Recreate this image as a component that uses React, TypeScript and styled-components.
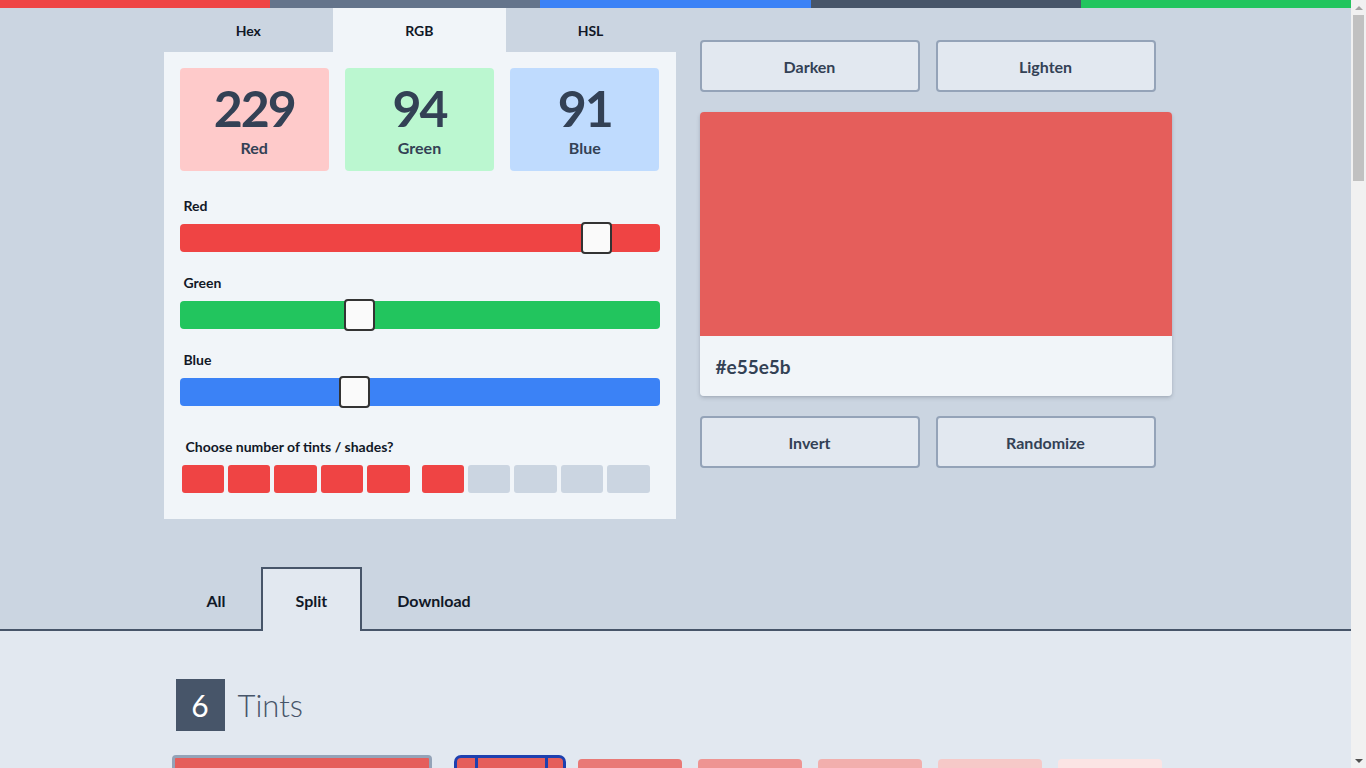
import React from "react";
import styled, { createGlobalStyle } from "styled-components";

const GlobalStyle = createGlobalStyle`
  html, body { margin: 0; padding: 0; }
  body {
    background: #cbd5e1;
    font-family: Lato, "Noto Sans", sans-serif;
    color: #111827;
    padding-right: 15px;
  }
  * { box-sizing: border-box; }
`;

const FakeScrollbar = styled.div`
  position: fixed;
  top: 0;
  right: 0;
  width: 15px;
  height: 100vh;
  background: #f1f1f1;
  display: flex;
  flex-direction: column;
  align-items: center;
  z-index: 10;
`;
const ScrollArrow = styled.div<{ $down?: boolean }>`
  height: 15px;
  width: 15px;
  display: flex;
  align-items: center;
  justify-content: center;
  &::after {
    content: "";
    border-left: 4px solid transparent;
    border-right: 4px solid transparent;
    ${(p) =>
      p.$down
        ? "border-top: 4px solid #505050;"
        : "border-bottom: 4px solid #a3a3a3;"}
  }
`;
const ScrollTrackArea = styled.div`
  flex: 1;
  width: 11px;
`;
const ScrollThumb = styled.div`
  width: 11px;
  height: 166px;
  background: #c1c1c1;
`;

const TopBar = styled.div`
  display: flex;
  height: 8px;
`;
const TopSeg = styled.div<{ $c: string }>`
  flex: 1;
  background: ${(p) => p.$c};
`;

const Main = styled.div`
  width: 1024px;
  margin: 0 auto;
  display: grid;
  grid-template-columns: 512px 472px;
  column-gap: 24px;
`;

const LeftCol = styled.div`
  display: flex;
  flex-direction: column;
`;

const ModeTabs = styled.div`
  display: flex;
  height: 44px;
`;
const ModeTab = styled.div<{ $active?: boolean }>`
  flex: 1 1 auto;
  display: flex;
  align-items: center;
  justify-content: center;
  font-size: 14px;
  font-weight: 700;
  color: #111827;
  background: ${(p) => (p.$active ? "#f1f5f9" : "transparent")};
`;

const Panel = styled.div`
  background: #f1f5f9;
  padding: 16px 16px 26px;
  display: flex;
  flex-direction: column;
`;

const Stats = styled.div`
  display: grid;
  grid-template-columns: repeat(3, 1fr);
  gap: 16px;
  margin-bottom: 4px;
`;
const StatBox = styled.div<{ $bg: string }>`
  height: 103px;
  border-radius: 4px;
  background: ${(p) => p.$bg};
  display: flex;
  flex-direction: column;
  align-items: center;
  color: #334155;
`;
const StatNum = styled.div`
  font-size: 50px;
  font-weight: 700;
  letter-spacing: -2px;
  line-height: 50px;
  margin-top: 15px;
`;
const StatLabel = styled.div`
  font-size: 16px;
  font-weight: 700;
  line-height: 20px;
  margin-top: 5px;
`;

const SliderGroup = styled.div`
  margin-top: 23px;
`;
const SliderLabel = styled.div`
  font-size: 14px;
  font-weight: 700;
  line-height: 16px;
  padding-left: 4px;
  margin-bottom: 10px;
`;
const Track = styled.div<{ $c: string }>`
  position: relative;
  height: 28px;
  border-radius: 4px;
  background: ${(p) => p.$c};
`;
const Thumb = styled.div`
  position: absolute;
  top: -2px;
  width: 31px;
  height: 32px;
  border: 2px solid #333;
  border-radius: 4px;
  background: #fafafa;
`;

const ChooseLabel = styled.div`
  margin-top: 33px;
  padding-left: 6px;
  font-size: 14px;
  font-weight: 700;
  line-height: 16px;
  margin-bottom: 10px;
`;
const Squares = styled.div`
  display: flex;
  gap: 12px;
  width: 470px;
  padding-left: 2px;
`;
const SquareGroup = styled.div`
  flex: 1;
  display: flex;
  gap: 4px;
`;
const Square = styled.div<{ $on: boolean }>`
  flex: 1;
  height: 28px;
  border-radius: 3px;
  background: ${(p) => (p.$on ? "#ef4444" : "#cbd5e1")};
`;

const RightCol = styled.div`
  padding-top: 32px;
  display: flex;
  flex-direction: column;
  gap: 20px;
`;
const ButtonRow = styled.div`
  display: flex;
  gap: 16px;
`;
const Button = styled.button`
  width: 220px;
  height: 52px;
  background: #e2e8f0;
  border: 2px solid #94a3b8;
  border-radius: 4px;
  font-family: inherit;
  font-size: 16px;
  font-weight: 700;
  color: #334155;
`;
const Card = styled.div`
  border-radius: 4px;
  overflow: hidden;
  box-shadow: 0 2px 4px rgba(15, 23, 42, 0.15), 0 1px 2px rgba(15, 23, 42, 0.08);
`;
const CardColor = styled.div<{ $c: string }>`
  height: 224px;
  background: ${(p) => p.$c};
`;
const CardFooter = styled.div`
  height: 60px;
  background: #f1f5f9;
  display: flex;
  align-items: center;
  padding: 0 16px;
  font-size: 19px;
  font-weight: 700;
  color: #334155;
`;

const LowerTabsBar = styled.div`
  margin-top: 48px;
  border-bottom: 2px solid #475569;
`;
const LowerTabsInner = styled.div`
  width: 1024px;
  margin: 0 auto;
  padding: 0 8px;
  display: flex;
`;
const LowerTab = styled.div<{ $active?: boolean }>`
  height: 64px;
  margin-bottom: -2px;
  padding: 0 33px;
  display: flex;
  align-items: center;
  font-size: 16px;
  font-weight: 700;
  color: #111827;
  border: 2px solid ${(p) => (p.$active ? "#475569" : "transparent")};
  border-bottom: none;
  background: ${(p) => (p.$active ? "#e2e8f0" : "transparent")};
`;

const Lower = styled.div`
  background: #e2e8f0;
  min-height: 400px;
`;
const LowerInner = styled.div`
  width: 1024px;
  margin: 0 auto;
  padding: 48px 8px 40px;
`;
const Heading = styled.div`
  display: flex;
  align-items: center;
  gap: 13px;
  margin-left: 4px;
`;
const CountBox = styled.div`
  width: 49px;
  height: 52px;
  background: #475569;
  color: #fff;
  font-size: 30px;
  font-weight: 400;
  display: flex;
  align-items: center;
  justify-content: center;
`;
const HeadingText = styled.div`
  font-size: 31px;
  font-weight: 300;
  color: #475569;
`;

const SwatchRow = styled.div`
  display: flex;
  align-items: flex-start;
  margin-top: 24px;
`;
const BaseSwatch = styled.div<{ $c: string }>`
  width: 260px;
  height: 120px;
  border: 3px solid #94a3b8;
  border-radius: 4px;
  background: ${(p) => p.$c};
  margin-right: 22px;
`;
const SelectedSwatch = styled.div<{ $c: string }>`
  width: 112px;
  height: 110px;
  border: 3px solid #1e40af;
  border-radius: 7px;
  background: ${(p) => p.$c};
  display: flex;
  margin-right: 12px;
`;
const SelectedMarks = styled.div`
  flex: 1;
  margin: 0 15px 0 18px;
  border-left: 3px solid #1e40af;
  border-right: 3px solid #1e40af;
`;
const TintSwatches = styled.div`
  display: flex;
  gap: 16px;
  margin-top: 4px;
`;
const Tint = styled.div<{ $c: string }>`
  width: 104px;
  height: 100px;
  border-radius: 4px;
  background: ${(p) => p.$c};
`;

const sliders = [
  { label: "Red", value: 229, color: "#ef4444" },
  { label: "Green", value: 94, color: "#22c55e" },
  { label: "Blue", value: 91, color: "#3b82f6" },
];

const tints = ["#e97976", "#ee9492", "#f2afad", "#f6c9c8", "#fbe4e4"];

export default function App() {
  const base = "#e55e5b";
  return (
    <>
      <GlobalStyle />
      <TopBar>
        {["#ef4444", "#64748b", "#3b82f6", "#475569", "#22c55e"].map((c) => (
          <TopSeg key={c} $c={c} />
        ))}
      </TopBar>
      <Main>
        <LeftCol>
          <ModeTabs>
            <ModeTab>Hex</ModeTab>
            <ModeTab $active>RGB</ModeTab>
            <ModeTab>HSL</ModeTab>
          </ModeTabs>
          <Panel>
            <Stats>
              <StatBox $bg="#fecaca">
                <StatNum>229</StatNum>
                <StatLabel>Red</StatLabel>
              </StatBox>
              <StatBox $bg="#bbf7d0">
                <StatNum>94</StatNum>
                <StatLabel>Green</StatLabel>
              </StatBox>
              <StatBox $bg="#bfdbfe">
                <StatNum>91</StatNum>
                <StatLabel>Blue</StatLabel>
              </StatBox>
            </Stats>
            {sliders.map((s) => (
              <SliderGroup key={s.label}>
                <SliderLabel>{s.label}</SliderLabel>
                <Track $c={s.color}>
                  <Thumb style={{ left: `${(s.value / 255) * 447}px` }} />
                </Track>
              </SliderGroup>
            ))}
            <ChooseLabel>Choose number of tints / shades?</ChooseLabel>
            <Squares>
              <SquareGroup>
                {[0, 1, 2, 3, 4].map((i) => (
                  <Square key={i} $on />
                ))}
              </SquareGroup>
              <SquareGroup>
                {[5, 6, 7, 8, 9].map((i) => (
                  <Square key={i} $on={i < 6} />
                ))}
              </SquareGroup>
            </Squares>
          </Panel>
        </LeftCol>
        <RightCol>
          <ButtonRow>
            <Button>Darken</Button>
            <Button>Lighten</Button>
          </ButtonRow>
          <Card>
            <CardColor $c={base} />
            <CardFooter>#e55e5b</CardFooter>
          </Card>
          <ButtonRow>
            <Button>Invert</Button>
            <Button>Randomize</Button>
          </ButtonRow>
        </RightCol>
      </Main>
      <LowerTabsBar>
        <LowerTabsInner>
          <LowerTab>All</LowerTab>
          <LowerTab $active>Split</LowerTab>
          <LowerTab>Download</LowerTab>
        </LowerTabsInner>
      </LowerTabsBar>
      <Lower>
        <LowerInner>
          <Heading>
            <CountBox>6</CountBox>
            <HeadingText>Tints</HeadingText>
          </Heading>
          <SwatchRow>
            <BaseSwatch $c={base} />
            <SelectedSwatch $c={base}>
              <SelectedMarks />
            </SelectedSwatch>
            <TintSwatches>
              {tints.map((t) => (
                <Tint key={t} $c={t} />
              ))}
            </TintSwatches>
          </SwatchRow>
        </LowerInner>
      </Lower>
      <FakeScrollbar>
        <ScrollArrow />
        <ScrollTrackArea>
          <ScrollThumb />
        </ScrollTrackArea>
        <ScrollArrow $down />
      </FakeScrollbar>
    </>
  );
}
